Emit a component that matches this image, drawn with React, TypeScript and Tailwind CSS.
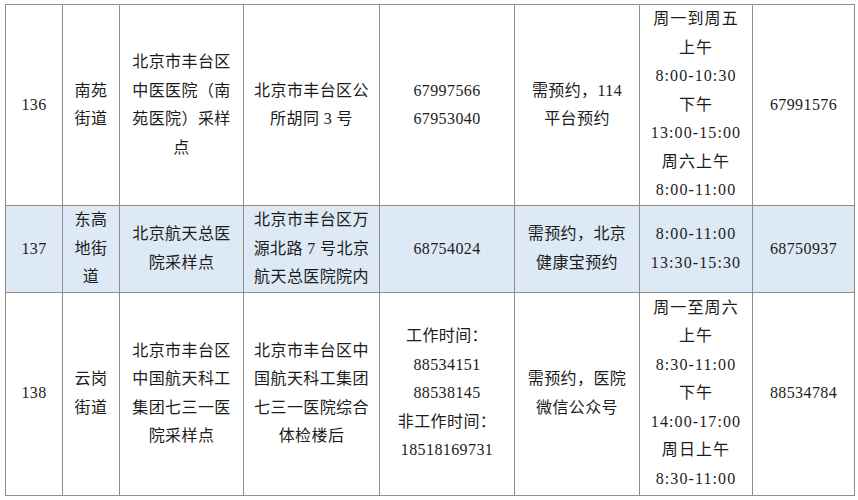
const rows = [
  {
    id: "136",
    street: ["南苑", "街道"],
    site: ["北京市丰台区", "中医医院（南", "苑医院）采样", "点"],
    address: ["北京市丰台区公", "所胡同 3 号"],
    phone: ["67997566", "67953040"],
    booking: ["需预约，114", "平台预约"],
    hours: ["周一到周五", "上午", "8:00-10:30", "下午", "13:00-15:00", "周六上午", "8:00-11:00"],
    contact: "67991576",
    height: "h-[201px]",
    bg: "bg-white",
  },
  {
    id: "137",
    street: ["东高", "地街", "道"],
    site: ["北京航天总医", "院采样点"],
    address: ["北京市丰台区万", "源北路 7 号北京", "航天总医院院内"],
    phone: ["68754024"],
    booking: ["需预约，北京", "健康宝预约"],
    hours: ["8:00-11:00", "13:30-15:30"],
    contact: "68750937",
    height: "h-[85px]",
    bg: "bg-[#dde9f5]",
  },
  {
    id: "138",
    street: ["云岗", "街道"],
    site: ["北京市丰台区", "中国航天科工", "集团七三一医", "院采样点"],
    address: ["北京市丰台区中", "国航天科工集团", "七三一医院综合", "体检楼后"],
    phone: ["工作时间：", "88534151", "88538145", "非工作时间：", "18518169731"],
    booking: ["需预约，医院", "微信公众号"],
    hours: ["周一至周六", "上午", "8:30-11:00", "下午", "14:00-17:00", "周日上午", "8:30-11:00"],
    contact: "88534784",
    height: "h-[203px]",
    bg: "bg-white",
  },
];

const Lines = ({ lines }: { lines: string[] }) => (
  <>
    {lines.map((l, i) => (
      <div key={i} className="whitespace-nowrap">
        {l}
      </div>
    ))}
  </>
);

const cell = "border-[1.5px] border-[#8e8e8e] px-0 py-0 text-center align-middle";

export default function App() {
  return (
    <div className="w-[858px] h-[500px] bg-white pt-[4px] pl-[5px] overflow-hidden">
      <table
        className="table-fixed border-collapse w-[849px] text-[16px] leading-[28.5px] tracking-[0.4px] text-[#1c1c1c]"
        style={{ fontFamily: '"Liberation Serif", "Noto Sans CJK SC", serif' }}
      >
        <colgroup>
          <col className="w-[57px]" />
          <col className="w-[57px]" />
          <col className="w-[124px]" />
          <col className="w-[136px]" />
          <col className="w-[135px]" />
          <col className="w-[125px]" />
          <col className="w-[113px]" />
          <col className="w-[102px]" />
        </colgroup>
        <tbody>
          {rows.map((r) => (
            <tr key={r.id} className={`${r.height} ${r.bg}`}>
              <td className={cell}>{r.id}</td>
              <td className={cell}>
                <Lines lines={r.street} />
              </td>
              <td className={cell}>
                <Lines lines={r.site} />
              </td>
              <td className={cell}>
                <Lines lines={r.address} />
              </td>
              <td className={cell}>
                <Lines lines={r.phone} />
              </td>
              <td className={cell}>
                <Lines lines={r.booking} />
              </td>
              <td className={`${cell} tracking-[1.1px]`}>
                <Lines lines={r.hours} />
              </td>
              <td className={cell}>{r.contact}</td>
            </tr>
          ))}
        </tbody>
      </table>
    </div>
  );
}
